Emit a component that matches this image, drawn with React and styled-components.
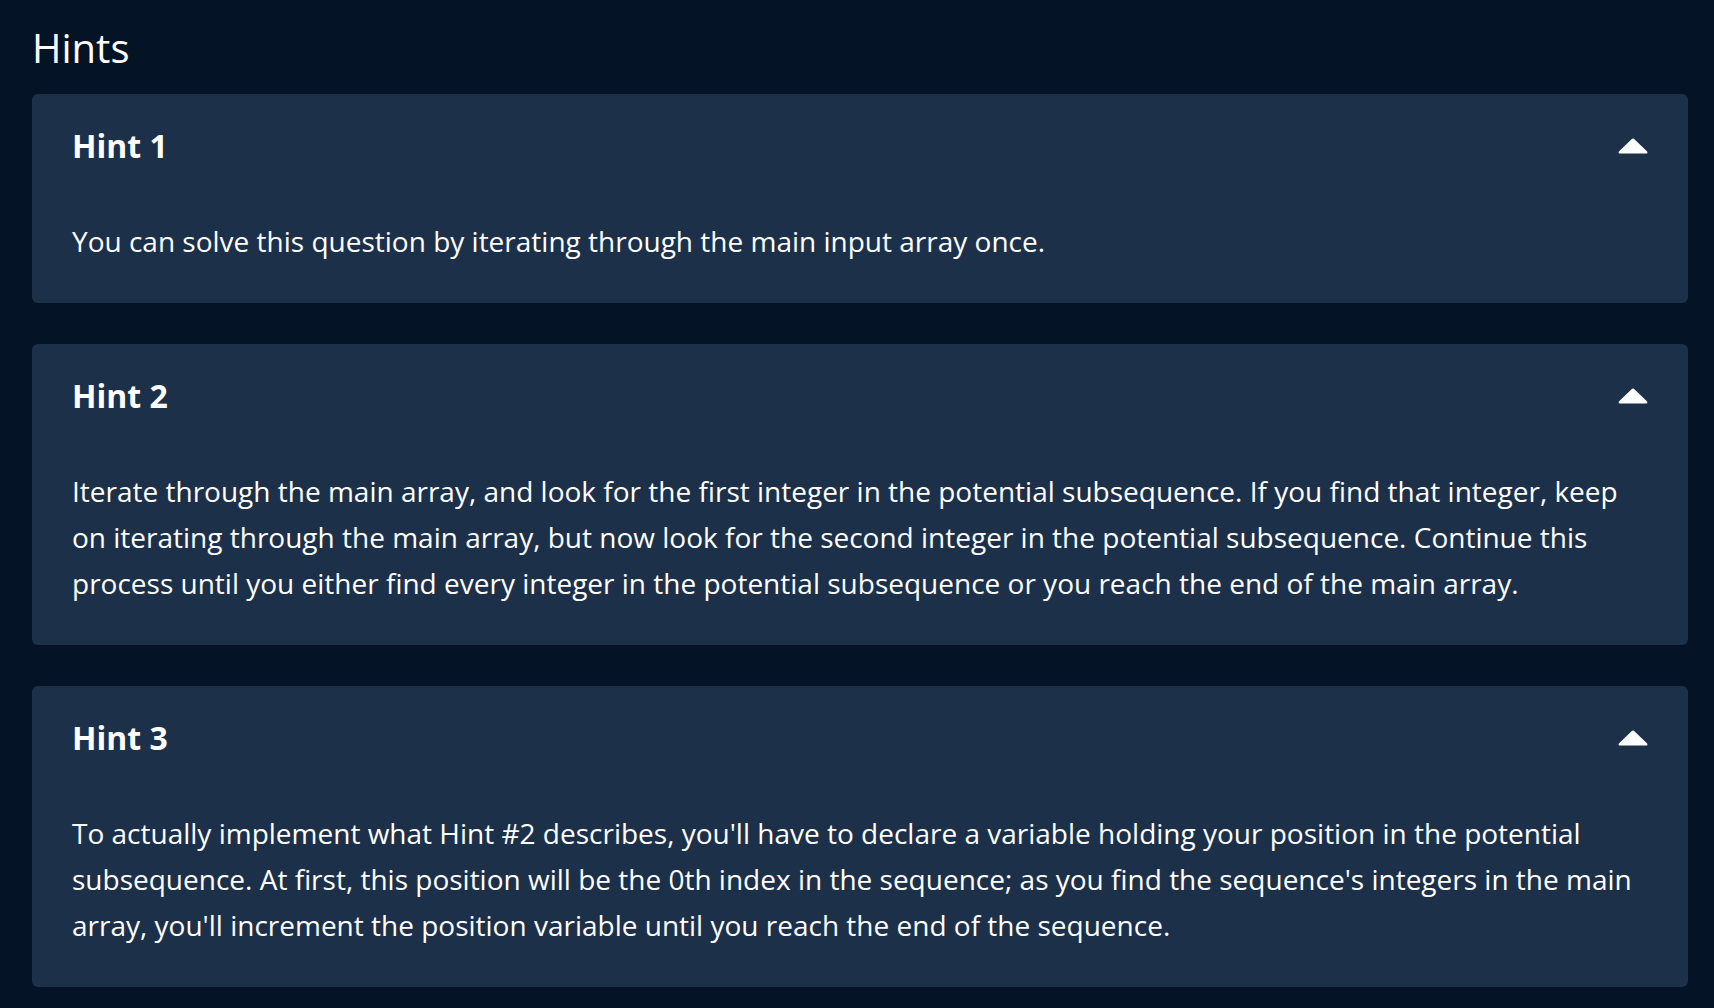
import React from "react";
import styled, { createGlobalStyle } from "styled-components";

const GlobalStyle = createGlobalStyle`
  html, body {
    margin: 0;
    padding: 0;
    background-color: #041426;
  }
  body {
    font-family: "Open Sans", "Liberation Sans", sans-serif;
    color: #ffffff;
  }
`;

const hints = [
  {
    title: "Hint 1",
    text: "You can solve this question by iterating through the main input array once.",
  },
  {
    title: "Hint 2",
    text: "Iterate through the main array, and look for the first integer in the potential subsequence. If you find that integer, keep on iterating through the main array, but now look for the second integer in the potential subsequence. Continue this process until you either find every integer in the potential subsequence or you reach the end of the main array.",
  },
  {
    title: "Hint 3",
    text: "To actually implement what Hint #2 describes, you'll have to declare a variable holding your position in the potential subsequence. At first, this position will be the 0th index in the sequence; as you find the sequence's integers in the main array, you'll increment the position variable until you reach the end of the sequence.",
  },
];

export default function App() {
  return (
    <>
      <GlobalStyle />
      <Page>
        <Title>Hints</Title>
        <HintList>
          {hints.map((hint) => (
            <HintCard key={hint.title}>
              <HintHeader>
                <HintTitle>{hint.title}</HintTitle>
                <ToggleButton type="button" aria-label="collapse">
                  <CaretUp />
                </ToggleButton>
              </HintHeader>
              <HintBody>{hint.text}</HintBody>
            </HintCard>
          ))}
        </HintList>
      </Page>
    </>
  );
}

function CaretUp() {
  return (
    <svg width="30" height="16" viewBox="0 0 30 16">
      <path
        d="M13.3 1.4 Q15 -0.2 16.7 1.4 L28.9 13.2 Q30.2 14.9 28.4 15.6 L1.6 15.6 Q-0.2 14.9 1.1 13.2 Z"
        fill="#ffffff"
      />
    </svg>
  );
}

const Page = styled.div`
  padding: 24px 26px 20px 32px;
`;

const Title = styled.h1`
  margin: 0 0 22px;
  font-size: 40px;
  font-weight: 400;
  line-height: 48px;
`;

const HintList = styled.div`
  display: flex;
  flex-direction: column;
  gap: 41px;
`;

const HintCard = styled.section`
  background-color: #1d3049;
  border-radius: 6px;
  padding: 32px 40px 39px 40px;
`;

const HintHeader = styled.div`
  display: flex;
  justify-content: space-between;
  align-items: center;
  height: 40px;
`;

const HintTitle = styled.h2`
  margin: 0;
  font-size: 32px;
  font-weight: 700;
  line-height: 40px;
`;

const ToggleButton = styled.button`
  display: flex;
  align-items: center;
  padding: 0;
  border: none;
  background: transparent;
  cursor: pointer;
`;

const HintBody = styled.p`
  margin: 52px 0 0;
  font-size: 28px;
  line-height: 46px;
`;
